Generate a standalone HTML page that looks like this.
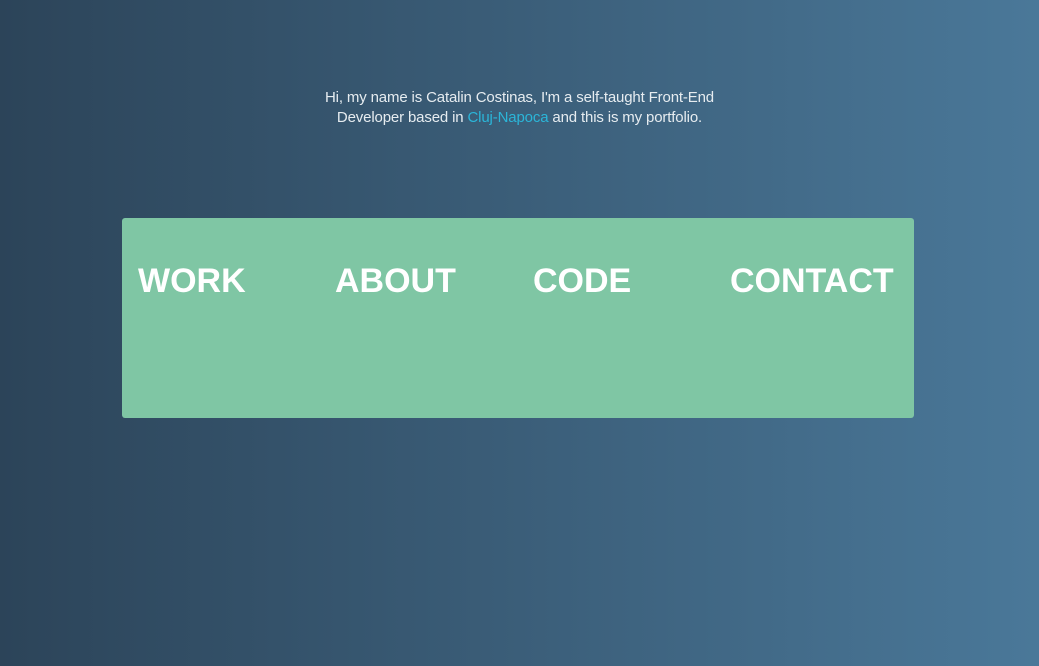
<!DOCTYPE html>
<html><head><style>
html,body{margin:0;padding:0;width:1039px;height:666px;overflow:hidden}
body{background:linear-gradient(to right,#2c4459,#4a7899);font-family:"Liberation Sans",sans-serif;position:relative}
.intro{position:absolute;left:0;width:1039px;top:88px;text-align:center;color:#e6ecf0;font-size:15px;line-height:20px;letter-spacing:-0.15px}
.intro a{color:#2bb5d8;text-decoration:none}
.box{position:absolute;left:122px;top:218px;width:792px;height:200px;background:#7fc6a4;border-radius:3px}
.box span{position:absolute;top:43px;color:#fff;font-weight:bold;font-size:34px;line-height:40px}
</style></head><body>
<div class="intro">Hi, my name is Catalin Costinas, I'm a self-taught Front-End<br>Developer based in <a>Cluj-Napoca</a> and this is my portfolio.</div>
<div class="box">
<span style="left:16px">WORK</span>
<span style="left:213px">ABOUT</span>
<span style="left:411px">CODE</span>
<span style="left:608px">CONTACT</span>
</div>
</body></html>
